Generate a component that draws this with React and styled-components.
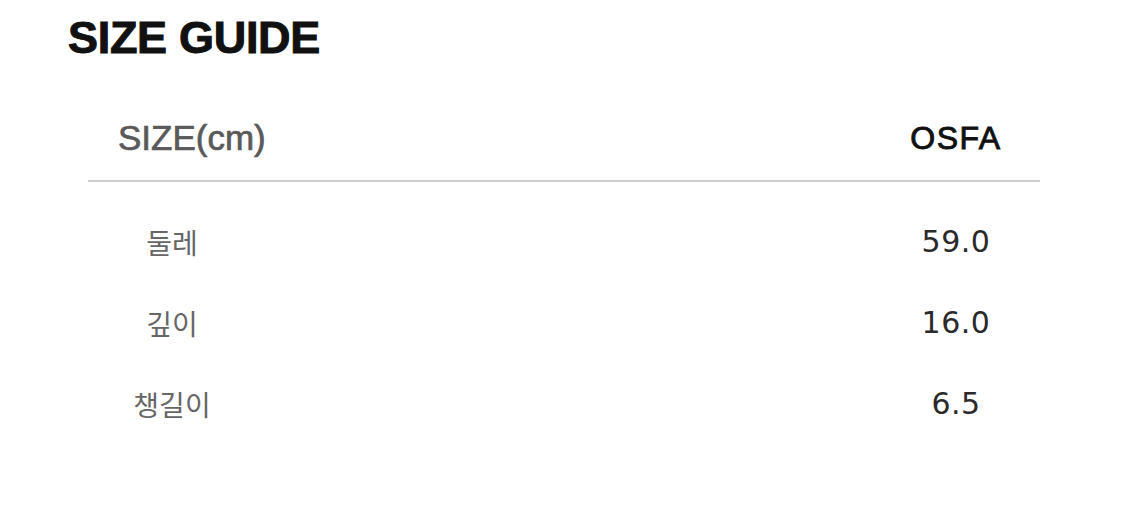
import React from 'react';
import styled, { createGlobalStyle } from 'styled-components';

const Global = createGlobalStyle`
  html, body {
    margin: 0;
    background: #fff;
  }
`;

const Page = styled.div`
  width: 1125px;
  height: 505px;
  background: #fff;
  padding: 12px 0 0 68px;
  box-sizing: border-box;
`;

const Title = styled.h1`
  margin: 0;
  font-family: "Liberation Sans", Arial, sans-serif;
  font-weight: 700;
  font-size: 45px;
  line-height: 52px;
  letter-spacing: -0.3px;
  color: #111;
  -webkit-text-stroke: 1px #111;
`;

const Table = styled.div`
  width: 952px;
  margin-left: 20px;
  margin-top: 32px;
`;

const Row = styled.div`
  display: flex;
  justify-content: space-between;
  align-items: center;
  height: ${p => p.$h || 81}px;
  border-bottom: ${p => (p.$line ? '2px solid #cfcfcf' : 'none')};
`;

const Cell = styled.div`
  width: 168px;
  text-align: ${p => p.$align || 'center'};
  padding-left: ${p => p.$pad || 0}px;
  box-sizing: border-box;
  white-space: nowrap;
`;

const HeadLabel = styled.span`
  font-family: "Liberation Sans", Arial, sans-serif;
  font-size: 35px;
  color: #5a5a5a;
  -webkit-text-stroke: 0.7px #5a5a5a;
`;

const HeadValue = styled.span`
  font-family: "Liberation Sans", Arial, sans-serif;
  font-size: 32px;
  color: #111;
  -webkit-text-stroke: 0.9px #111;
  letter-spacing: 1.5px;
`;

const Label = styled.span`
  font-family: "Noto Sans CJK KR", "Noto Sans", sans-serif;
  font-size: 28px;
  font-weight: 400;
  color: #666;
`;

const Value = styled.span`
  font-family: "DejaVu Sans", sans-serif;
  font-size: 30px;
  color: #2a2a2a;
  letter-spacing: 0.5px;
`;

const rows = [
  ['둘레', '59.0'],
  ['깊이', '16.0'],
  ['챙길이', '6.5'],
];

export default function App() {
  return (
    <Page>
      <Global />
      <Title>SIZE GUIDE</Title>
      <Table>
        <Row $h={84} $line>
          <Cell $align="left" $pad={30}><HeadLabel>SIZE(cm)</HeadLabel></Cell>
          <Cell><HeadValue>OSFA</HeadValue></Cell>
        </Row>
        <Row $h={19} />
        {rows.map(([k, v]) => (
          <Row key={k}>
            <Cell><Label>{k}</Label></Cell>
            <Cell><Value>{v}</Value></Cell>
          </Row>
        ))}
      </Table>
    </Page>
  );
}
